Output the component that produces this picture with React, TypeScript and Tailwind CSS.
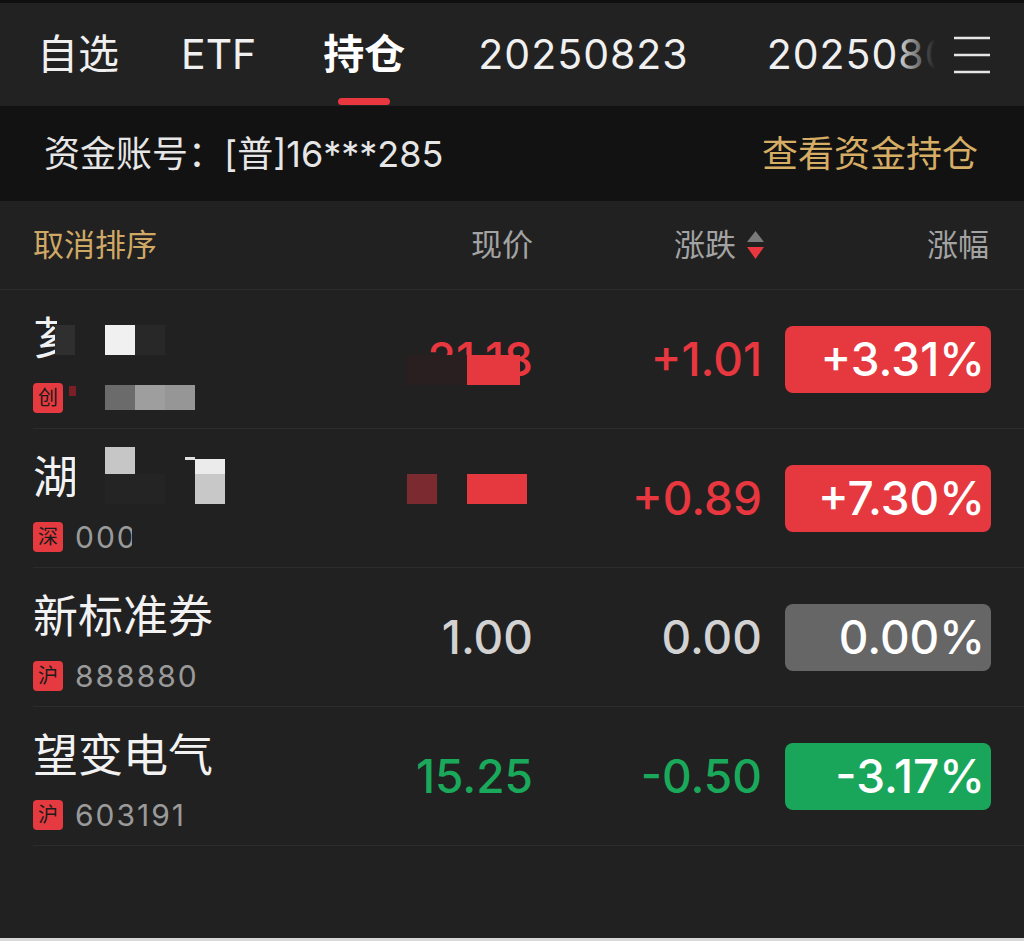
import type { ReactNode } from 'react';

const RED = 'text-[#e8373f]';
const GREEN = 'text-[#1aa95a]';

function Badge({ label }: { label: string }) {
  return (
    <span className="w-[30px] h-[30px] rounded-[4px] bg-[#e53a3f] text-[#1b1b1b] text-[20px] leading-none flex items-center justify-center">
      {label}
    </span>
  );
}

function Pill({ value, tone }: { value: string; tone: 'red' | 'green' | 'gray' }) {
  const bg = tone === 'red' ? 'bg-[#e6383f]' : tone === 'green' ? 'bg-[#1aa65a]' : 'bg-[#666666]';
  return (
    <div className={`ml-[23px] w-[206px] h-[67px] rounded-[8px] ${bg} flex items-center justify-end pr-[6px] text-[46px] font-medium text-white`}>
      {value}
    </div>
  );
}

function Row({
  name,
  badge,
  code,
  price,
  change,
  pct,
  tone,
  color,
  overlay,
}: {
  name: ReactNode;
  badge: string;
  code: ReactNode;
  price: ReactNode;
  change: string;
  pct: string;
  tone: 'red' | 'green' | 'gray';
  color: string;
  overlay?: ReactNode;
}) {
  return (
    <div className="relative ml-[33px] pr-[33px] h-[139px] border-b border-[#2c2c2c] flex items-center">
      <div className="flex-1 self-stretch pt-[23px] flex flex-col">
        <div className="h-[52px] text-[45px] leading-[52px] text-[#f2f2f2]">{name}</div>
        <div className="mt-[17px] h-[32px] flex items-center gap-[12px]">
          <Badge label={badge} />
          <span className="text-[30px] tracking-[2px] text-[#9a9a9a] leading-none">{code}</span>
        </div>
      </div>
      <div className={`w-[162px] -mr-[2px] text-right text-[46px] font-medium ${color}`}>{price}</div>
      <div className={`w-[231px] text-right text-[46px] font-medium ${color}`}>{change}</div>
      <Pill value={pct} tone={tone} />
      {overlay}
    </div>
  );
}

export default function App() {
  return (
    <div className="w-[1024px] h-[941px] bg-[#212121] flex flex-col overflow-hidden font-[Inter,'Noto_Sans_CJK_SC',sans-serif]">
      <div className="h-[3px] bg-[#0f0f0f]" />

      {/* tab bar */}
      <div className="relative h-[103px] bg-[#222222] flex">
        <div className="w-[935px] flex items-stretch overflow-hidden whitespace-nowrap text-[41px] text-[#f0f0f0] pl-[37px]">
          <span className="flex items-center">自选</span>
          <span className="self-center ml-[24px] w-[2px] h-[34px] bg-[#333333]" />
          <span className="flex items-center ml-[38px]">ETF</span>
          <span className="relative flex items-center ml-[67px] font-bold text-white">
            持仓
            <span className="absolute bottom-[1px] left-1/2 -translate-x-1/2 w-[52px] h-[7px] rounded-full bg-[#e8373f]" />
          </span>
          <span className="flex items-center ml-[73px] tracking-[1px]">20250823</span>
          <span className="flex items-center ml-[78px] tracking-[1px]">20250806</span>
        </div>
        <div className="absolute top-0 bottom-0 left-[893px] w-[42px] bg-gradient-to-r from-transparent to-[#222222]" />
        <div className="flex-1 flex items-center pl-[18px]">
          <svg width="38" height="40" viewBox="0 0 38 40" fill="none" stroke="#e6e6e6" strokeWidth="2.5">
            <line x1="1" y1="3" x2="37" y2="3" />
            <line x1="1" y1="20" x2="37" y2="20" />
            <line x1="1" y1="37" x2="37" y2="37" />
          </svg>
        </div>
      </div>

      {/* account bar */}
      <div className="h-[95px] bg-[#121212] flex items-center justify-between pl-[44px] pr-[46px] text-[36px]">
        <span className="text-[#e6e6e6]">资金账号：[普]16***285</span>
        <span className="text-[#d6ad65]">查看资金持仓</span>
      </div>

      {/* header */}
      <div className="h-[89px] flex items-center px-[33px] border-b border-[#2c2c2c] text-[31px] text-[#a3a3a3]">
        <div className="flex-1 text-[#cfa866]">取消排序</div>
        <div className="w-[160px] text-right">现价</div>
        <div className="w-[229px] flex items-center justify-end">
          <span>涨跌</span>
          <svg className="ml-[11px] mr-[-2px]" width="17" height="28" viewBox="0 0 17 28">
            <path d="M8.5 0 L17 11 L0 11 Z" fill="#7a7a7a" />
            <path d="M0 16 L17 16 L8.5 28 Z" fill="#e8373f" />
          </svg>
        </div>
        <div className="ml-[23px] w-[206px] text-right pr-[2px]">涨幅</div>
      </div>

      <Row
        name={<span className="inline-block w-[24px] overflow-hidden">芗</span>}
        badge="创"
        code=""
        price={<span>21.18</span>}
        change="+1.01"
        pct="+3.31%"
        tone="red"
        color={RED}
        overlay={
          <>
            <div className="absolute left-[22px] top-[35px] w-[20px] h-[30px] bg-[#2f2f2f]" />
            <div className="absolute left-[72px] top-[35px] w-[30px] h-[30px] bg-[#f0f0f0]" />
            <div className="absolute left-[102px] top-[35px] w-[30px] h-[30px] bg-[#282828]" />
            <div className="absolute left-[36px] top-[96px] w-[7px] h-[10px] bg-[#7a1f25]" />
            <div className="absolute left-[72px] top-[95px] w-[30px] h-[25px] bg-[#6b6b6b]" />
            <div className="absolute left-[102px] top-[95px] w-[30px] h-[25px] bg-[#9e9e9e]" />
            <div className="absolute left-[132px] top-[95px] w-[30px] h-[25px] bg-[#969696]" />
            <div className="absolute left-[374px] top-[65px] w-[60px] h-[30px] bg-[#2a1f20]" />
            <div className="absolute left-[434px] top-[65px] w-[53px] h-[30px] bg-[#e5383f]" />
          </>
        }
      />
      <Row
        name={<span className="inline-block w-[42px] overflow-hidden">湖</span>}
        badge="深"
        code={<span className="inline-block w-[57px] overflow-hidden align-bottom">000</span>}
        price={<span />}
        change="+0.89"
        pct="+7.30%"
        tone="red"
        color={RED}
        overlay={
          <>
            <div className="absolute left-[72px] top-[18px] w-[30px] h-[27px] bg-[#c6c6c6]" />
            <div className="absolute left-[72px] top-[45px] w-[60px] h-[30px] bg-[#242424]" />
            <div className="absolute left-[152px] top-[28px] w-[10px] h-[3px] bg-[#e0e0e0]" />
            <div className="absolute left-[162px] top-[30px] w-[30px] h-[15px] bg-[#ebebeb]" />
            <div className="absolute left-[162px] top-[45px] w-[30px] h-[30px] bg-[#c8c8c8]" />
            <div className="absolute left-[374px] top-[45px] w-[30px] h-[30px] bg-[#7b2b2f]" />
            <div className="absolute left-[434px] top-[45px] w-[60px] h-[30px] bg-[#e5383f]" />
          </>
        }
      />
      <Row name="新标准券" badge="沪" code="888880" price="1.00" change="0.00" pct="0.00%" tone="gray" color="text-[#d2d2d2]" />
      <Row name="望变电气" badge="沪" code="603191" price="15.25" change="-0.50" pct="-3.17%" tone="green" color={GREEN} />

      <div className="flex-1" />
      <div className="h-[3px] bg-[#d8d8d8]" />
    </div>
  );
}
